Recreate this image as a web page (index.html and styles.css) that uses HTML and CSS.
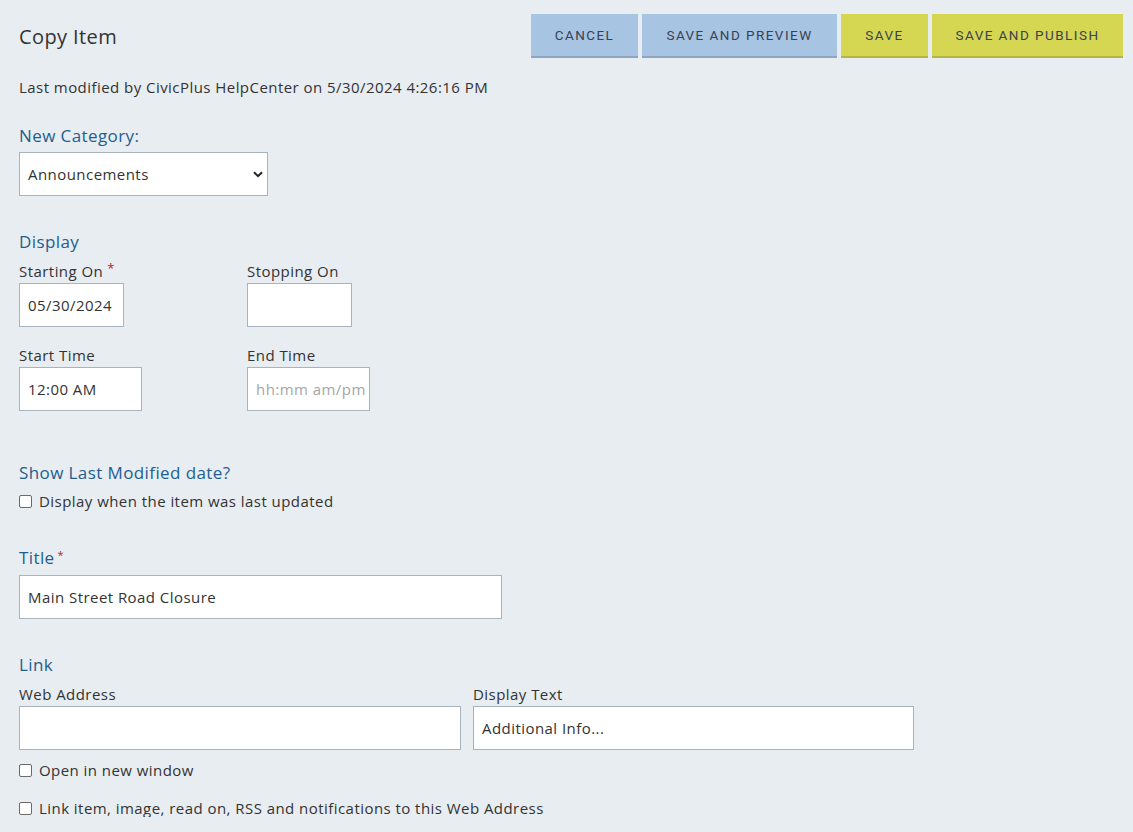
FILE: index.html
```html
<!DOCTYPE html>
<html>
<head>
<meta charset="utf-8">
<link rel="stylesheet" href="styles.css">
</head>
<body>
<div class="page">
  <header class="topbar">
    <h1 class="title">Copy Item</h1>
    <div class="actions">
      <button class="btn btn-blue btn-cancel">CANCEL</button>
      <button class="btn btn-blue btn-preview">SAVE AND PREVIEW</button>
      <button class="btn btn-yellow btn-save">SAVE</button>
      <button class="btn btn-yellow btn-publish">SAVE AND PUBLISH</button>
    </div>
  </header>

  <p class="modified">Last modified by CivicPlus HelpCenter on 5/30/2024 4:26:16 PM</p>

  <section class="sec-category">
    <div class="heading">New Category:</div>
    <div class="select">
      <span>Announcements</span>
      <svg class="chev" width="10" height="7" viewBox="0 0 10 7"><path d="M1 1.2 L5 5.2 L9 1.2" fill="none" stroke="#222" stroke-width="2"/></svg>
    </div>
  </section>

  <section class="sec-display">
    <div class="heading">Display</div>
    <div class="grid2">
      <div class="field">
        <label class="lbl">Starting On<span class="req">*</span></label>
        <div class="inp w105">05/30/2024</div>
      </div>
      <div class="field">
        <label class="lbl">Stopping On</label>
        <div class="inp w105"></div>
      </div>
      <div class="field">
        <label class="lbl">Start Time</label>
        <div class="inp w123">12:00 AM</div>
      </div>
      <div class="field">
        <label class="lbl">End Time</label>
        <div class="inp w123 ph">hh:mm am/pm</div>
      </div>
    </div>
  </section>

  <section class="sec-lastmod">
    <div class="heading">Show Last Modified date?</div>
    <label class="check"><span class="box"></span>Display when the item was last updated</label>
  </section>

  <section class="sec-title">
    <div class="heading">Title<span class="req small">*</span></div>
    <div class="inp w483">Main Street Road Closure</div>
  </section>

  <section class="sec-link">
    <div class="heading">Link</div>
    <div class="row2">
      <div class="field">
        <label class="lbl">Web Address</label>
        <div class="inp w442"></div>
      </div>
      <div class="field">
        <label class="lbl">Display Text</label>
        <div class="inp w441">Additional Info...</div>
      </div>
    </div>
    <label class="check c1"><span class="box"></span>Open in new window</label>
    <label class="check c2"><span class="box"></span>Link item, image, read on, RSS and notifications to this Web Address</label>
  </section>
</div>
</body>
</html>
```

FILE: styles.css
```css
html, body {
  margin: 0;
  padding: 0;
  background: #e8edf2;
}
body {
  font-family: "Open Sans", "Noto Sans", sans-serif;
  color: #333333;
  font-size: 15px;
  letter-spacing: 0.45px;
}
.page {
  padding: 14px 10px 0 19px;
}
.topbar {
  display: flex;
  justify-content: space-between;
  align-items: flex-start;
  height: 44px;
}
.title {
  margin: 11px 0 0 0;
  font-size: 20px;
  font-weight: 400;
  line-height: 24px;
  letter-spacing: 0.4px;
  color: #333;
}
.actions {
  display: flex;
  gap: 4px;
}
.btn {
  height: 44px;
  border: 0;
  border-bottom: 2px solid;
  font-family: "Roboto", "Liberation Sans", sans-serif;
  font-size: 13.5px;
  letter-spacing: 1.45px;
  color: #3a4150;
  padding: 0;
  box-sizing: border-box;
}
.btn-blue { background: #a7c4e3; border-bottom-color: #8ea6c2; }
.btn-yellow { background: #d5d753; border-bottom-color: #b3b545; }
.btn-cancel { width: 107px; }
.btn-preview { width: 195px; }
.btn-save { width: 87px; }
.btn-publish { width: 191px; }

.modified {
  margin: 20px 0 0 0;
  line-height: 18px;
}
.heading {
  color: #1d5e8f;
  font-size: 17px;
  line-height: 22px;
  letter-spacing: 0.4px;
}
.sec-category { margin-top: 29px; }
.select {
  margin-top: 5px;
  width: 249px;
  height: 44px;
  box-sizing: border-box;
  background: #fff;
  border: 1px solid #a8b3bf;
  display: flex;
  align-items: center;
  justify-content: space-between;
  padding: 0 4px 0 8px;
}
.chev { margin-top: 1px; }

.sec-display { margin-top: 35px; }
.grid2 {
  display: grid;
  grid-template-columns: 228px auto;
  row-gap: 19px;
  margin-top: 9px;
}
.field { display: flex; flex-direction: column; }
.lbl {
  line-height: 18px;
  height: 18px;
  margin-bottom: 3px;
  color: #333;
  position: relative;
}
.req {
  color: #b4242b;
  font-size: 13px;
  line-height: 0;
  position: relative;
  top: -4px;
  margin-left: 4px;
}
.req.small { font-size: 11px; margin-left: 3px; top: -5px; }
.inp {
  height: 44px;
  box-sizing: border-box;
  background: #fff;
  border: 1px solid #a8b3bf;
  padding: 0 8px;
  display: flex;
  align-items: center;
  white-space: nowrap;
  overflow: hidden;
}
.ph { color: #a3a6aa; }
.w105 { width: 105px; }
.w123 { width: 123px; }
.w483 { width: 483px; }
.w442 { width: 442px; }
.w441 { width: 441px; }

.sec-lastmod { margin-top: 51px; }
.check {
  display: flex;
  align-items: center;
  line-height: 18px;
  margin-top: 8px;
}
.box {
  width: 11px;
  height: 11px;
  border: 1px solid #6b6b6b;
  border-radius: 2px;
  background: #fff;
  margin-right: 7px;
  flex: none;
}
.sec-title { margin-top: 37px; }
.sec-title .heading { height: 22px; }
.sec-title .inp { margin-top: 6px; }

.sec-link { margin-top: 35px; }
.row2 {
  display: flex;
  gap: 12px;
  margin-top: 9px;
}
.check.c1 { margin-top: 11px; }
.check.c2 { margin-top: 20px; }
```
